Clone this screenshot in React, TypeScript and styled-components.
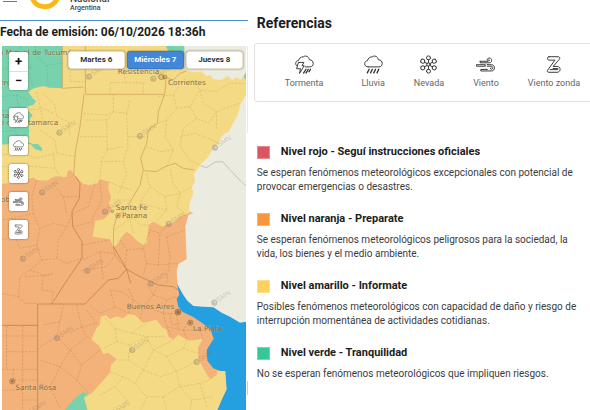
import React from "react";
import styled, { createGlobalStyle } from "styled-components";

const Global = createGlobalStyle`
  * { box-sizing: border-box; }
  body { margin: 0; background: #fff; font-family: Roboto, "Liberation Sans", sans-serif; color: #1c1c1c; }
  h1, h2, h3, p, ul { margin: 0; padding: 0; }
`;

const Page = styled.div`
  display: grid;
  grid-template-columns: minmax(0, 42fr) minmax(0, 58fr);
  grid-template-rows: minmax(0, 1fr);
  height: 100vh;
`;

const MapSide = styled.section`
  display: flex;
  flex-direction: column;
  min-height: 0;
`;

const Header = styled.header`
  display: flex;
  align-items: flex-end;
  height: 21px;
  flex: none;
  overflow: hidden;
  border-bottom: 1px solid #4a8fd0;
`;

const MenuButton = styled.button`
  align-self: flex-start;
  width: 14px;
  height: 2px;
  margin-left: 3px;
  padding: 0;
  border: 0;
  border-bottom: 1px solid #777;
  background: none;
`;

const Logo = styled.svg`
  align-self: flex-start;
  width: 30px;
  height: 10px;
  margin-left: 13px;
`;

const Brand = styled.div`
  margin: 0 0 8px 10px;
  font: 500 10px/10px Roboto, sans-serif;
  color: #444;
  span { display: block; font-size: 7px; line-height: 8px; }
`;

const Issued = styled.h1`
  flex: none;
  height: 25px;
  font-size: 12px;
  line-height: 23px;
  font-weight: 700;
  white-space: nowrap;
`;

const Slides = styled.div`
  display: flex;
  flex: 1;
  gap: 1px;
  min-height: 0;
  padding-left: 2px;
`;

const MapFrame = styled.div`
  position: relative;
  flex: 1;
  min-width: 0;
  overflow: hidden;
  background: #ecebe0;
`;

const NextSlide = styled.div`
  width: 1px;
  background: linear-gradient(#f9eab9 24%, #fff 24%, #fff 92%, #a9d8f2 92%, #a9d8f2 96%, #fff 96%);
`;

const MapDrawing = styled.svg`
  display: block;
  width: 100%;
  height: 100%;
`;

const Days = styled.div`
  position: absolute;
  top: 5px;
  right: 3px;
  display: flex;
  gap: 2px;
`;

const Day = styled.button<{ $active?: boolean }>`
  width: 57px;
  height: 18px;
  padding: 0;
  border: 1px solid ${(p) => (p.$active ? "#3a79c4" : "#e4dfd0")};
  border-radius: 3px;
  background: ${(p) => (p.$active ? "#4388d8" : "#fff")};
  color: ${(p) => (p.$active ? "#fff" : "#333")};
  font: 700 8px/14px Roboto, sans-serif;
  box-shadow: 0 0 2px rgba(60, 50, 20, 0.7);
`;

const Tools = styled.div`
  position: absolute;
  top: 6px;
  left: 7px;
  display: flex;
  flex-direction: column;
  gap: 9px;
`;

const Zoom = styled.div`
  display: flex;
  flex-direction: column;
  width: 19px;
  margin-bottom: 9px;
  border-radius: 2px;
  background: #fff;
  box-shadow: 0 0 2px rgba(60, 50, 20, 0.6);
`;

const ZoomButton = styled.button`
  height: 19px;
  padding: 0;
  border: 0;
  background: none;
  color: #111;
  font: 700 13px/18px Roboto, sans-serif;
  & + & { border-top: 1px solid #ddd; }
`;

const Tool = styled.button`
  display: flex;
  align-items: center;
  justify-content: center;
  width: 19px;
  height: 19px;
  padding: 0;
  border: 0;
  border-radius: 2px;
  background: #fff;
  color: #333;
  box-shadow: 0 0 2px rgba(60, 50, 20, 0.8);
`;

const Icon = styled.svg<{ $size: number }>`
  display: block;
  width: ${(p) => p.$size}px;
  height: ${(p) => p.$size}px;
  fill: none;
  stroke: currentColor;
  stroke-width: 1;
  stroke-linecap: round;
  stroke-linejoin: round;
`;

const References = styled.section`
  padding: 14px 0 0 9px;
  min-width: 0;
  overflow: hidden;
`;

const Title = styled.h2`
  font-size: 14px;
  line-height: 18px;
  font-weight: 700;
`;

const Phenomena = styled.ul`
  display: flex;
  gap: 29px;
  height: 59px;
  margin: 11px -4px 43px -3px;
  padding: 11px 0 0 30px;
  border: 1px solid #e2e2e2;
  border-radius: 3px;
  list-style: none;
`;

const Phenomenon = styled.li`
  display: flex;
  flex-direction: column;
  align-items: center;
  gap: 2px;
  font-size: 9px;
  line-height: 14px;
  color: #666;
  white-space: nowrap;
  svg { color: #333; }
  &:first-child { margin-right: 9px; }
`;

const Level = styled.article`
  margin-bottom: 18px;
`;

const LevelTitle = styled.h3`
  display: flex;
  align-items: center;
  gap: 11px;
  height: 14px;
  font-size: 11px;
  line-height: 14px;
  font-weight: 700;
`;

const Swatch = styled.span<{ $color: string }>`
  width: 13px;
  height: 13px;
  border: 1px solid rgba(255, 255, 255, 0.3);
  background: ${(p) => p.$color};
`;

const LevelText = styled.p`
  max-width: 326px;
  margin-top: 7px;
  font-size: 10px;
  line-height: 14px;
  color: #3b3b3b;
`;

type Kind = "storm" | "rain" | "snow" | "wind" | "zonda";

const CLOUD = "M4.5 12.5C2 12.5 .7 11 .7 9.2C.7 7.3 2 6 3.7 5.9C4.2 3.4 6.2 1.9 8.6 2C9.8 .8 12.8.6 14.2 2.7C14.7 3.4 15 4.2 15 4.9C17.6 5.1 19.2 6.7 19.2 8.9C19.2 11 17.8 12.5 15.7 12.5";

const drawings: Record<Kind, React.ReactNode> = {
  storm: (
    <>
      <path d="M1.9 11.3C.9 10.6.7 9.7.7 8.9C.7 7.1 2 6 3.7 5.9C4.2 3.4 6.2 1.9 8.6 2C9.8.8 12.8.6 14.2 2.7C14.7 3.4 15 4.2 15 4.9C17.6 5.1 19.2 6.7 19.2 8.9C19.2 11 17.8 12.5 15.7 12.5H10.8" />
      <path d="M4 7.8H9.4L7.4 11.3H9.7L4.8 19.4L5.8 14.4H2.1Z" />
      <path d="M11.6 15L9 19M14 15L11.6 19M16.4 15L14.8 17.6" strokeWidth="1.4" />
    </>
  ),
  rain: (
    <>
      <path d={CLOUD + "H4.5"} />
      <path d="M5.4 15L3.5 18.8M8.8 15L6.9 18.8M12.2 15L10.3 18.8M15.6 15L13.7 18.8" strokeWidth="1.4" />
    </>
  ),
  snow: (
    <>
      {[0, 60, 120, 180, 240, 300].map((a) => (
        <g key={a} transform={`rotate(${a} 10 10)`}>
          <circle cx="10" cy="3" r="2.1" />
          <path d="M10 8.2V5.1" />
        </g>
      ))}
      <circle cx="10" cy="10" r="1.8" />
    </>
  ),
  wind: (
    <>
      <path d="M4.4 6.6H12.2M4.4 6.6V8.2H14C17.4 8.2 17.4 3.2 14 3.2C11.4 3.2 11.2 6 13.2 6.2C14.6 6.2 14.6 4.8 13.7 4.8" />
      <path d="M.8 10.2H9.8V11.8H.8ZM11.6 10.2H16.4C20.4 10.2 20.4 16.8 16.4 16.8H5V15.2H12M12 11.8H16C18.2 11.8 18.2 15 16 15C14.8 15 14.8 13.6 15.8 13.5" />
    </>
  ),
  zonda: (
    <path d="M5.2 1.8H15C16.6 1.8 17 3.6 16.2 4.6L9.6 12H13.8C18 12 18 18.2 13.8 18.2H5C3.4 18.2 3 16.8 4 15.6L11.6 5.4H5.2C3 5.4 3 1.8 5.2 1.8ZM6.4 15.4H13.8C15.4 15.4 15.4 14.2 14 14.2H9.6" />
  ),
};

const WeatherIcon = ({ kind, size }: { kind: Kind; size: number }) => (
  <Icon $size={size} viewBox="0 0 20 20" aria-hidden="true">{drawings[kind]}</Icon>
);

const phenomena: { kind: Kind; label: string }[] = [
  { kind: "storm", label: "Tormenta" },
  { kind: "rain", label: "Lluvia" },
  { kind: "snow", label: "Nevada" },
  { kind: "wind", label: "Viento" },
  { kind: "zonda", label: "Viento zonda" },
];

const levels = [
  { color: "#dc5662", title: "Nivel rojo - Seguí instrucciones oficiales", text: "Se esperan fenómenos meteorológicos excepcionales con potencial de provocar emergencias o desastres." },
  { color: "#f7963f", title: "Nivel naranja - Preparate", text: "Se esperan fenómenos meteorológicos peligrosos para la sociedad, la vida, los bienes y el medio ambiente." },
  { color: "#fdd25c", title: "Nivel amarillo - Informate", text: "Posibles fenómenos meteorológicos con capacidad de daño y riesgo de interrupción momentánea de actividades cotidianas." },
  { color: "#36c795", title: "Nivel verde - Tranquilidad", text: "No se esperan fenómenos meteorológicos que impliquen riesgos." },
];

const watermarks = [
  [46, 230], [267, 230], [460, 236], [178, 398], [420, 408], [645, 443], [126, 577], [315, 635],
  [506, 672], [69, 776], [262, 812], [453, 851], [643, 908], [171, 1014], [397, 1050], [590, 1086], [90, 1238], [340, 1238],
];

const cities: [number, number, string][] = [
  [-4, 165, "n Miguel de Tucumán"], [353, 222, "Resistencia"], [504, 255, "Corrientes"],
  [84, 375, "tamarca"], [0, 353, "na"], [0, 376, "e c"], [-2, 255, "erc"], [2, 607, "ob"],
  [347, 629, "Santa Fe"], [366, 654, "Parana"], [380, 927, "Buenos Aires"], [579, 993, "La Plata"], [46, 1169, "Santa Rosa"],
];

const AlertMap = () => (
  <MapDrawing viewBox="6 138 732 1092" preserveAspectRatio="xMinYMin slice" role="img" aria-label="Mapa de alertas">
    <path fill="#ecebe0" d="M0 130H760V1240H0Z" />
    <path fill="#24a0e0" d="M530 850L550 885L562 902L580 918L610 920L640 922L665 938L690 950L720 968L738 965L770 960V1240H500V900Z" />
    <path fill="#f2b27a" d="M0 500H240L580 640L565 645L556 680L558 730L560 778L535 792L530 815L533 860L538 884L530 896L535 920L548 936L578 950L608 970L632 990L641 1016L620 1050L622 1082L640 1105L660 1112L660 1160L600 1240H0Z" />
    <path fill="#f5da85" d="M180 130H490L510 160L545 185L560 212L585 216L604 214L620 228L632 226L640 238L662 240L684 228L696 240L710 232L722 239L738 218V285L722 312L713 345L695 378L688 394L668 405L655 430L638 446L625 470L600 495L582 522L585 545L576 560L580 580L568 612L567 640L540 650L524 666L505 672L488 680L460 665L446 675L441 730L430 735L410 722L395 706L380 695L364 712L350 735L340 740L330 718L278 710L286 662L310 658L330 640L333 625L326 610L333 595L325 565L326 545L301 538L290 551L265 555L248 551L226 528L213 510L203 514L200 531L165 529L140 542L110 540L100 532L70 545L40 549L0 552V420L80 250L180 260Z" />
    <path fill="#78d2ae" d="M0 130H187V265L150 263L130 258L98 266L85 276L98 295L108 304L101 314L78 321L88 336L98 345L85 365L88 395L84 425L100 433L113 431L126 444V454L105 447L92 433L50 432L0 434Z" />
    <path fill="#78d2ae" d="M493 130H553V180L535 184L510 165ZM738 215L731 230L738 240ZM190 1234L225 1195L250 1176L265 1185L253 1196L264 1234Z" />
    <path fill="#f5da85" d="M274 1018L289 985L300 974L302 950L318 946L330 958L348 949L370 955L384 943L405 945L428 968L470 959L485 980L500 990L505 1010L520 1020L534 1004L568 1022L608 1016L594 1044L595 1078L610 1104L621 1124L632 1138L650 1125L652 1113L676 1113L680 1168L665 1200L648 1240H265L252 1192L275 1180L330 1118L333 1095L350 1078L325 1058L310 1062L298 1038Z" />

    <g fill="none" stroke="#c8924f" strokeOpacity=".6" strokeWidth="3" strokeLinejoin="round">
      <path d="M187 138V265M256 138V283M256 283H494L498 244L488 230M187 265L250 261M252 283L240 380L226 455L221 527M494 283L475 335L472 370L445 390L440 430L422 475L430 510L420 555L400 590L382 620L350 650L341 684L340 742L345 765L380 808M432 512L470 515L495 500L525 490L550 505L583 510M488 230L520 240L540 220L560 213M500 130L545 180" />
      <path stroke="#b4733c" d="M226 528L240 550L238 595L216 635L218 680L246 725V775L195 850L155 912M341 740L380 808L355 835L325 840L255 912H113V1240M0 976H113M380 808L420 830L475 855L520 860L535 870M380 808L392 850" />
      <path stroke="#aaa79d" d="M602 497L620 503L645 486L668 485L695 515L722 543L738 558" />
    </g>

    <g fill="none" stroke="#2f9474" strokeOpacity=".35" strokeWidth="2" strokeDasharray="7 4" strokeLinejoin="round">
      <path d="M105 138L110 170L140 195L187 190M60 138L55 200L90 225L100 260M5 210L55 200M5 290L50 285L85 300M5 330L60 340L88 336M50 285L60 340L45 390L60 430M5 395L45 390M140 195L145 262" />
    </g>

    <g fill="none" stroke="#bb9c55" strokeOpacity=".5" strokeWidth="2" strokeDasharray="7 4" strokeLinejoin="round">
      <path d="M256 180H370L375 248H330V283M375 248H430V283M210 180V245H256M110 275L118 310L130 370M130 280L165 315L170 350L205 365L210 410M90 330L130 325L160 340M250 340L320 345L340 335L380 340L390 300M340 283V335L320 360L322 450L305 480L300 536M380 340L384 440L370 485L380 525L355 580M320 360H252M240 410H320M384 410H440M320 450L370 440M300 485L370 484M120 390L165 420L170 460L225 470M5 465L60 460L110 475L165 460M5 500L70 497L165 505L180 530M165 505L160 460M325 545L360 560L400 570M340 600L390 600M345 690L395 650L420 675L445 675" />
      <path d="M475 290L520 285L540 250L580 240L600 270L650 275L690 250L735 250M520 285L530 325L500 360L495 410L520 450L500 500M530 325L570 320L600 270M570 320L590 355L625 370L650 335L690 320L720 310M590 355L550 385L540 440L575 485L600 495M540 410L585 400L625 415L655 430M475 370L500 360M440 440L480 455L520 450M600 270L610 310L650 335L650 390M440 520L450 560L425 600L410 635M450 560L495 590L500 630L470 665M495 590L540 580L575 560M510 510L520 550L540 580L530 620L560 645M420 610L460 620L500 630M400 700L390 660L420 640" />
      <path d="M315 955L345 985L350 1025L310 1045M345 985L395 1000L450 960M350 1025L390 1035L440 1010L495 1010M395 1000L440 1010L460 1050L520 1020M390 1035L385 1080L350 1080M385 1080L430 1110L460 1050L500 1070L530 1115L595 1080M430 1110L405 1150L370 1130L330 1115M405 1150L440 1190L420 1235M430 1110L480 1130L530 1115L540 1160L490 1190L440 1190M500 1070L550 1045L560 1020M540 1160L600 1150L630 1138M540 1160L575 1200L640 1190M490 1190L500 1235M575 1200L570 1235M345 1160L300 1185M370 1130L345 1160L380 1200L370 1235M550 1045L595 1060M600 1150L620 1220" />
    </g>

    <g fill="none" stroke="#b87940" strokeOpacity=".5" strokeWidth="2" strokeDasharray="7 4" strokeLinejoin="round">
      <path d="M110 540L95 590L100 640L60 650L5 660M100 640L120 685L160 670L200 680L217 640M120 685L110 735L60 745L45 710L5 720M110 735L125 780L90 810L60 830L55 890L5 880M125 780L170 775L200 790L245 775M170 775L175 720L200 680M90 810L130 825L125 870L160 875L155 905M160 820L130 825M55 890L75 910H113M75 830L155 825M200 640L190 590L160 550M190 590L235 590M285 550L265 620L220 640M300 540L305 600L275 660M218 680L280 665M248 735L330 720M250 780L300 755L340 760M300 755L310 840M345 765L320 800L240 812M360 720L380 750L430 745L450 690L480 700L500 675M380 750L375 800M430 745L440 790L475 795L480 700M475 795L535 790M500 710L555 690M500 710L510 770L500 850M440 790L430 825" />
      <path d="M5 1008H113M20 978V1055H113M68 978V1230M5 1108H113M20 1055V1108M40 1108V1140H113M5 1170H68M68 1200H113M130 975L180 965L190 915M180 965L170 1010L120 1040M170 1010L210 1050L180 1100L120 1080M210 1050L260 1010L275 1018M210 1050L245 1095L300 1050M245 1095L230 1140L180 1100L150 1160L120 1150M230 1140L265 1180M150 1160L180 1225M230 915L245 980L210 1000M245 980L290 970L260 930M245 980L260 1010M270 915L300 940L345 920L330 870M345 920L385 940L400 900L365 875L330 870M400 900L430 920L420 960M430 920L460 885L440 850M460 885L500 900L530 890M500 900L490 940L430 920M490 940L540 940M490 940L500 980L550 990L570 960M500 980L515 1010M550 990L560 1018M550 990L600 990L630 990M460 885L470 860M385 865L400 900M510 940L515 975L540 970M530 945L535 990M600 990L610 1018" />
    </g>

    <g fill="none" stroke="#786f66" strokeOpacity=".35">
      {watermarks.map(([x, y]) => (
        <g key={`${x}-${y}`} transform={`translate(${x} ${y})`}>
          <circle r="8" strokeWidth="3" fill="#89827a" fillOpacity=".2" />
          <path d="M-3 -4V3H4" strokeWidth="2" />
          <text x="10" y="5" transform="rotate(-32)" fontFamily="Liberation Sans, sans-serif" fontSize="21" fill="#786f66" fillOpacity=".3" stroke="none">SMN</text>
        </g>
      ))}
    </g>

    <g fill="#8c623c" fillOpacity=".7" stroke="#77502f" strokeOpacity=".6" strokeWidth="2">
      <circle cx="534" cy="936" r="9" fillOpacity=".4" /><circle cx="534" cy="936" r="4" />
      <circle cx="571" cy="968" r="8" fillOpacity=".2" /><circle cx="571" cy="968" r="3" />
      <circle cx="37" cy="1144" r="8" fillOpacity=".2" /><circle cx="37" cy="1144" r="3" />
      <circle cx="354" cy="647" r="7" fillOpacity=".1" /><circle cx="354" cy="647" r="2" />
      <circle cx="337" cy="634" r="4" fillOpacity=".2" />
      <circle cx="484" cy="231" r="8" fillOpacity=".2" /><circle cx="495" cy="231" r="6" fillOpacity=".2" />
    </g>

    <g fontFamily="DejaVu Sans, sans-serif" fontSize="22" fill="#755f3b" fillOpacity=".9" stroke="#f5dfb0" strokeOpacity=".25" strokeWidth="3" paintOrder="stroke">
      {cities.map(([x, y, name]) => <text key={name} x={x} y={y}>{name}</text>)}
    </g>
  </MapDrawing>
);

export default function App() {
  return (
    <>
      <Global />
      <Page>
        <MapSide>
          <Header>
            <MenuButton aria-label="Menú" />
            <Logo viewBox="0 0 30 10" aria-hidden="true">
              <path d="M2 -3C5 9 22 10 27 -1" fill="none" stroke="#fdb714" strokeWidth="5" />
            </Logo>
            <Brand>Nacional<span>Argentina</span></Brand>
          </Header>
          <Issued>Fecha de emisión: 06/10/2026 18:36h</Issued>
          <Slides>
            <MapFrame>
              <AlertMap />
              <Tools>
                <Zoom>
                  <ZoomButton aria-label="Acercar">+</ZoomButton>
                  <ZoomButton aria-label="Alejar">−</ZoomButton>
                </Zoom>
                {phenomena.map((p) => (
                  <Tool key={p.kind} aria-label={p.label}><WeatherIcon kind={p.kind} size={11} /></Tool>
                ))}
              </Tools>
              <Days>
                <Day>Martes 6</Day>
                <Day $active>Miércoles 7</Day>
                <Day>Jueves 8</Day>
              </Days>
            </MapFrame>
            <NextSlide />
          </Slides>
        </MapSide>
        <References>
          <Title>Referencias</Title>
          <Phenomena>
            {phenomena.map((p) => (
              <Phenomenon key={p.kind}><WeatherIcon kind={p.kind} size={19} />{p.label}</Phenomenon>
            ))}
          </Phenomena>
          {levels.map((l) => (
            <Level key={l.title}>
              <LevelTitle><Swatch $color={l.color} />{l.title}</LevelTitle>
              <LevelText>{l.text}</LevelText>
            </Level>
          ))}
        </References>
      </Page>
    </>
  );
}
